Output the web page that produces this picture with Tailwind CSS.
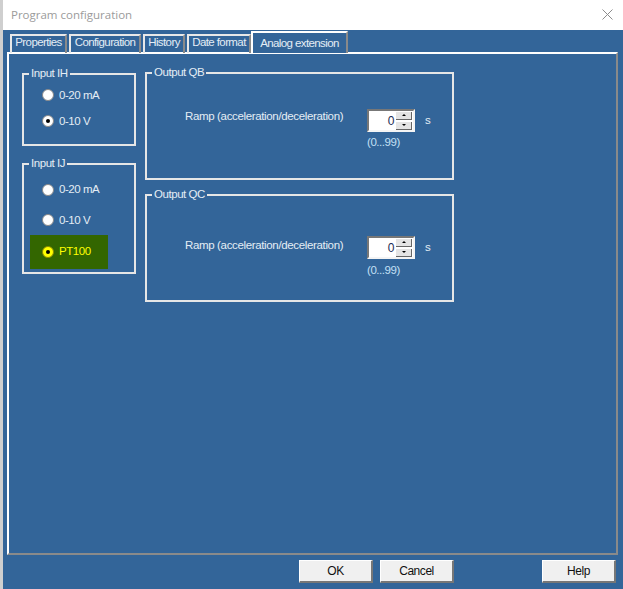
<!DOCTYPE html>
<html lang="en">
<head>
    <meta charset="utf-8">
    <title>Program configuration</title>
    <script src="https://cdn.jsdelivr.net/npm/@tailwindcss/browser@4"></script>
</head>

<body class="m-0 overflow-hidden bg-white">
    <div class="flex h-[589px] w-[623px] flex-col border-l-[3px] border-[#cfcfcf] font-['Liberation_Sans',sans-serif] text-[11.5px] tracking-[-0.45px]">
        <!-- title bar -->
        <div class="flex h-[30px] items-center justify-between pl-[8px] pr-[10px]">
            <span class="font-['Open_Sans',sans-serif] text-[11.5px] tracking-normal text-[#9b9b9b]">Program configuration</span>
            <svg class="-mt-[2px] h-[11px] w-[11px]" viewBox="0 0 11 11" fill="none" stroke="#8c8c8c" stroke-width="1"><path d="M0.5 0.5 10.5 10.5M10.5 0.5 0.5 10.5"/></svg>
        </div>

        <div class="flex flex-1 flex-col bg-[#336599] pl-[4px] pr-[5px]">
            <!-- tabs -->
            <div class="relative z-10 -mb-[1px] flex h-[23px] items-end gap-[2px] pl-[3px] tracking-[-0.6px] text-[#e4edf5]">
                <div class="flex h-[19px] w-[57px] items-center justify-center border-l-2 border-r-2 border-t-2 border-l-[#e8e8e8] border-r-[#8a8a8a] border-t-[#e8e8e8] pb-[3px]">Properties</div>
                <div class="flex h-[19px] w-[72px] items-center justify-center border-l-2 border-r-2 border-t-2 border-l-[#e8e8e8] border-r-[#8a8a8a] border-t-[#e8e8e8] pb-[3px]">Configuration</div>
                <div class="flex h-[19px] w-[42px] items-center justify-center border-l-2 border-r-2 border-t-2 border-l-[#e8e8e8] border-r-[#8a8a8a] border-t-[#e8e8e8] pb-[3px]">History</div>
                <div class="-mr-[1px] flex h-[19px] w-[64px] items-center justify-center border-l-2 border-r-2 border-t-2 border-l-[#e8e8e8] border-r-[#8a8a8a] border-t-[#e8e8e8] pb-[3px]">Date format</div>
                <div class="-ml-[1px] flex h-[22px] w-[97px] items-center justify-center border-l-2 border-r-2 border-t-2 border-l-white border-r-[#8a8a8a] border-t-white bg-[#336599] pt-[1px]">Analog extension</div>
            </div>

            <!-- tab page -->
            <div class="flex h-[503px] gap-[9px] border-b-2 border-l-2 border-r-2 border-t-2 border-b-[#8a8a8a] border-l-white border-r-[#8a8a8a] border-t-white pl-[13px] pt-[10px] text-[#e4edf5]">
                <div class="flex w-[114px] flex-col gap-[9px] pt-[1px]">
                    <fieldset class="h-[81px] border-2 border-[#e6e6e6] pl-[18px]">
                        <legend class="-ml-[13px] px-[2px]">Input IH</legend>
                        <div class="flex h-[26px] items-center gap-[5px]">
                            <span class="h-[12px] w-[12px] rounded-full border border-[#8a8a8a] bg-white"></span>
                            <span>0-20 mA</span>
                        </div>
                        <div class="flex h-[26px] items-center gap-[5px]">
                            <span class="flex h-[12px] w-[12px] items-center justify-center rounded-full border border-[#8a8a8a] bg-white"><span class="h-[4px] w-[4px] rounded-full bg-black"></span></span>
                            <span>0-10 V</span>
                        </div>
                    </fieldset>
                    <fieldset class="h-[119px] border-2 border-[#e6e6e6] pt-[2px]">
                        <legend class="ml-[5px] px-[2px]">Input IJ</legend>
                        <div class="flex h-[31px] items-center gap-[5px] pl-[18px]">
                            <span class="h-[12px] w-[12px] rounded-full border border-[#8a8a8a] bg-white"></span>
                            <span>0-20 mA</span>
                        </div>
                        <div class="flex h-[30px] items-center gap-[5px] pl-[18px]">
                            <span class="h-[12px] w-[12px] rounded-full border border-[#8a8a8a] bg-white"></span>
                            <span>0-10 V</span>
                        </div>
                        <div class="ml-[6px] flex h-[34px] w-[78px] items-center gap-[5px] bg-[#336600] pb-[1px] pl-[12px] text-[#ffff00]">
                            <span class="flex h-[12px] w-[12px] items-center justify-center rounded-full border border-[#8a8a00] bg-[#ffff00]"><span class="h-[4px] w-[4px] rounded-full bg-black"></span></span>
                            <span>PT100</span>
                        </div>
                    </fieldset>
                </div>

                <div class="flex w-[309px] flex-col gap-[6px]">
                    <fieldset class="h-[116px] border-2 border-[#e6e6e6]">
                        <legend class="ml-[5px] px-[2px]">Output QB</legend>
                        <div class="flex pl-[38px] pt-[27px]">
                            <span class="w-[182px] tracking-[-0.35px]">Ramp (acceleration/deceleration)</span>
                            <div class="mt-[1px]">
                                <div class="flex items-center">
                                    <div class="flex h-[23px] w-[48px] items-center justify-between border-b-2 border-l-2 border-r-2 border-t-2 border-b-[#f4f4f4] border-l-[#777] border-r-[#f4f4f4] border-t-[#777] bg-white pr-[1px] text-[#1a2a55]">
                                        <span class="flex-1 pr-[2px] text-right text-[12px]">0</span>
                                        <div class="flex w-[16px] flex-col gap-[2px]">
                                            <span class="flex h-[8px] items-center justify-center border-b border-r border-b-[#666] border-r-[#666] bg-[#e4e4e4]"><span class="h-0 w-0 border-x-[2px] border-b-[2px] border-x-transparent border-b-black"></span></span>
                                            <span class="flex h-[8px] items-center justify-center border-b border-r border-b-[#666] border-r-[#666] bg-[#e4e4e4]"><span class="h-0 w-0 border-x-[2px] border-t-[2px] border-x-transparent border-t-black"></span></span>
                                        </div>
                                    </div>
                                    <span class="ml-[10px]">s</span>
                                </div>
                                <div class="mt-[2px] text-[#c3e0f5]">(0...99)</div>
                            </div>
                        </div>
                    </fieldset>
                    <fieldset class="h-[116px] border-2 border-[#e6e6e6]">
                        <legend class="ml-[5px] px-[2px]">Output QC</legend>
                        <div class="flex pl-[38px] pt-[34px]">
                            <span class="w-[182px] tracking-[-0.35px]">Ramp (acceleration/deceleration)</span>
                            <div class="-mt-[1px]">
                                <div class="flex items-center">
                                    <div class="flex h-[23px] w-[48px] items-center justify-between border-b-2 border-l-2 border-r-2 border-t-2 border-b-[#f4f4f4] border-l-[#777] border-r-[#f4f4f4] border-t-[#777] bg-white pr-[1px] text-[#1a2a55]">
                                        <span class="flex-1 pr-[2px] text-right text-[12px]">0</span>
                                        <div class="flex w-[16px] flex-col gap-[2px]">
                                            <span class="flex h-[8px] items-center justify-center border-b border-r border-b-[#666] border-r-[#666] bg-[#e4e4e4]"><span class="h-0 w-0 border-x-[2px] border-b-[2px] border-x-transparent border-b-black"></span></span>
                                            <span class="flex h-[8px] items-center justify-center border-b border-r border-b-[#666] border-r-[#666] bg-[#e4e4e4]"><span class="h-0 w-0 border-x-[2px] border-t-[2px] border-x-transparent border-t-black"></span></span>
                                        </div>
                                    </div>
                                    <span class="ml-[10px]">s</span>
                                </div>
                                <div class="mt-[3px] text-[#c3e0f5]">(0...99)</div>
                            </div>
                        </div>
                    </fieldset>
                </div>
            </div>

            <!-- dialog buttons -->
            <div class="flex gap-[7px] pl-[292px] pt-[5px] text-[12px] text-[#111]">
                <button class="h-[23px] w-[74px] border-b-2 border-l border-r-2 border-t border-b-[#777] border-l-white border-r-[#777] border-t-white bg-[#f0f0f0]">OK</button>
                <button class="h-[23px] w-[74px] border-b-2 border-l border-r-2 border-t border-b-[#777] border-l-white border-r-[#777] border-t-white bg-[#f0f0f0]">Cancel</button>
                <button class="ml-[81px] h-[23px] w-[74px] border-b-2 border-l border-r-2 border-t border-b-[#777] border-l-white border-r-[#777] border-t-white bg-[#f0f0f0]">Help</button>
            </div>
        </div>
    </div>
</body>

</html>
